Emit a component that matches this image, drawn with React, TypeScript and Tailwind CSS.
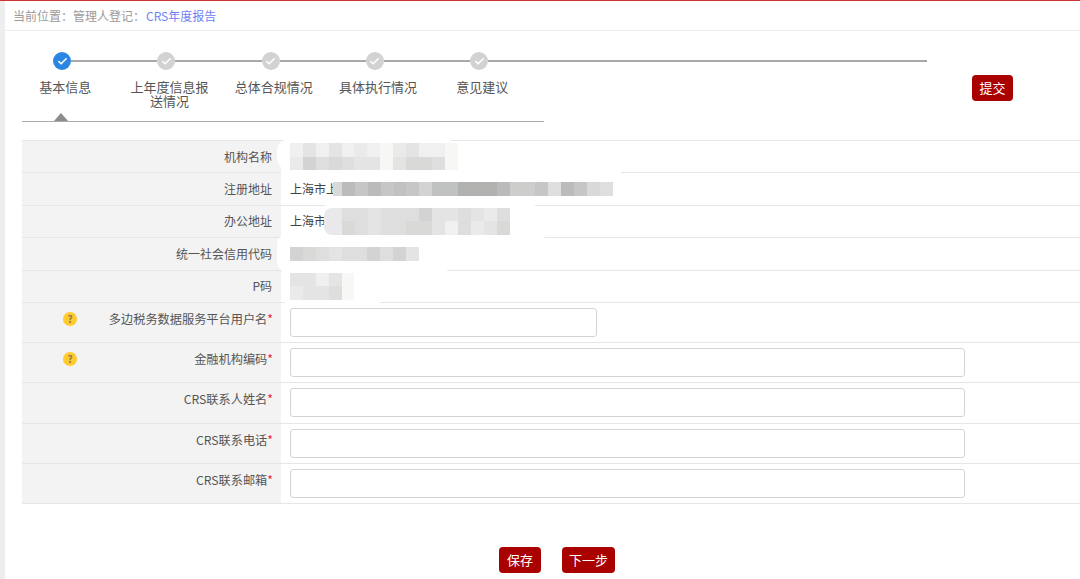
import { Check } from 'lucide-react';

const font = "font-['Noto_Sans_CJK_SC','Liberation_Sans',sans-serif]";

const steps = ['基本信息', '上年度信息报送情况', '总体合规情况', '具体执行情况', '意见建议'];

// mosaic shades, lightest to darkest (one hex digit per block)
const shades = [
  'bg-[#f7f7f6]',
  'bg-[#f0f0f0]',
  'bg-[#eaeaea]',
  'bg-[#e4e4e4]',
  'bg-[#dedede]',
  'bg-[#d9d9d8]',
  'bg-[#d3d3d3]',
  'bg-[#cdcdcc]',
  'bg-[#c5c6c5]',
  'bg-[#c0c1c1]',
  'bg-[#bbbbbb]',
  'bg-[#b1b2b0]',
];

function Mosaic({ rows }: { rows: string[] }) {
  return (
    <div className="flex flex-col">
      {rows.map((row, i) => (
        <div key={i} className="flex">
          {row.split('').map((d, j) => (
            <div key={j} className={`w-[12.9px] h-[13.5px] ${shades[parseInt(d, 16)]}`} />
          ))}
        </div>
      ))}
    </div>
  );
}

function HelpDot() {
  return (
    <div className="absolute left-[41px] top-[9px] w-[14px] h-[14px] rounded-full bg-[#fdcb30] flex items-center justify-center text-[10px] leading-none font-bold text-[#8a7a45]">
      ?
    </div>
  );
}

function InfoRow({ label, children }: { label: string; children: React.ReactNode }) {
  return (
    <div className="flex h-[32.4px] border-b border-[#e6e6e6]">
      <div className="w-[259px] shrink-0 bg-[#f3f3f3] flex items-center justify-end pr-[9px] text-[12px] text-[#555]">
        {label}
      </div>
      <div className="relative z-10 flex-1 flex items-center pl-[9px] text-[12px] text-[#444]">{children}</div>
    </div>
  );
}

function FieldRow({ label, help, narrow }: { label: string; help?: boolean; narrow?: boolean }) {
  return (
    <div className="flex h-[40.2px] border-b border-[#e6e6e6]">
      <div className="relative w-[259px] shrink-0 bg-[#f3f3f3] flex justify-end pt-[7px] pr-[8px] text-[12.2px] leading-[19px] text-[#555]">
        {help && <HelpDot />}
        <span>
          {label}
          <span className="text-[#e8112d]">*</span>
        </span>
      </div>
      <div className="flex-1 flex items-center pl-[9px]">
        <input
          className={`${narrow ? 'w-[307px]' : 'w-[675px]'} h-[29px] rounded-[3px] border border-[#d4d4d4] bg-white outline-none`}
        />
      </div>
    </div>
  );
}

function RedButton({ text, width }: { text: string; width: string }) {
  return (
    <button className={`${width} h-[26px] rounded-[4px] bg-[#a90000] text-white text-[13px] leading-none`}>
      {text}
    </button>
  );
}

export default function App() {
  return (
    <div className={`${font} w-[1080px] h-[579px] overflow-hidden bg-white flex`}>
      <div className="w-[5px] shrink-0 bg-[#eeeeee]" />
      <div className="flex-1 min-w-0 flex flex-col">
        <div className="h-px bg-[#cc3333] -ml-[5px]" />

        {/* Breadcrumb */}
        <div className="h-[30px] border-b border-[#eeeeee] flex items-center pl-[8px] text-[12px] text-[#9a9a9a]">
          当前位置：管理人登记：<span className="ml-px text-[#6f82f5]">CRS年度报告</span>
        </div>

        {/* Stepper */}
        <div className="relative h-[109px]">
          <div className="flex items-center pt-[21px] pl-[48px] pr-[153px]">
            {steps.map((s, i) => (
              <div key={s} className="contents">
                <div
                  className={`w-[18px] h-[18px] shrink-0 rounded-full flex items-center justify-center ${
                    i === 0 ? 'bg-[#2a86e2]' : 'bg-[#d2d2d2]'
                  }`}
                >
                  <Check className="w-[11px] h-[11px] text-white" strokeWidth={3.5} />
                </div>
                <div className={`h-[2px] bg-[#a8a8a8] ${i === steps.length - 1 ? 'flex-1' : 'w-[86.3px] shrink-0'}`} />
              </div>
            ))}
          </div>
          <div className="flex pl-[8px] pt-[10px]">
            {steps.map((s) => (
              <div key={s} className="w-[104.3px] shrink-0 px-[12px] text-center text-[13px] leading-[14px] text-[#555]">
                {s}
              </div>
            ))}
          </div>
          <div className="absolute left-[967px] top-[43px]">
            <RedButton text="提交" width="w-[41px]" />
          </div>
          <div className="absolute left-[17px] bottom-[18px] w-[522px] h-px bg-[#aaaaaa]" />
          <div className="absolute left-[49px] bottom-[19px] w-0 h-0 border-x-[7px] border-x-transparent border-b-[8px] border-b-[#8c8c8c]" />
        </div>

        {/* Form table */}
        <div className="relative ml-[17px] border-t border-[#e6e6e6]">
          {/* white smudges left by the redaction, they cut the row lines */}
          <div className="absolute left-[255px] -top-[2px] w-[180px] h-[31px] rounded-xl bg-white" />
          <div className="absolute left-[259px] top-[30px] w-[340px] h-[4px] bg-white" />
          <div className="absolute left-[303px] top-[63px] w-[210px] h-[4px] bg-white" />
          <div className="absolute left-[255px] top-[96px] w-[270px] h-[10px] rounded-md bg-white" />
          <div className="absolute left-[255px] top-[96px] w-[175px] h-[36px] rounded-xl bg-white" />
          <div className="absolute left-[263px] top-[160px] w-[95px] h-[4px] bg-white" />

          <InfoRow label="机构名称">
            <Mosaic rows={['1313121023110', '2645433035540']} />
          </InfoRow>
          <InfoRow label="注册地址">
            <span>上海市上</span>
            <div className="-ml-[5px] w-[9px] h-[13.5px] bg-[#d9d9d9]" />
            <Mosaic rows={['a8a898699bbba7784a854']} />
          </InfoRow>
          <InfoRow label="办公地址">
            <span>上海市</span>
            <div className="-ml-[2px] w-[18px] h-[27px] rounded-l-lg bg-[#e9e9eb]" />
            <Mosaic rows={['4434446334324', '5434455314235']} />
          </InfoRow>
          <InfoRow label="统一社会信用代码">
            <Mosaic rows={['6543446463']} />
          </InfoRow>
          <InfoRow label="P码">
            <Mosaic rows={['33130', '23340']} />
          </InfoRow>
          <FieldRow label="多边税务数据服务平台用户名" help narrow />
          <FieldRow label="金融机构编码" help />
          <FieldRow label="CRS联系人姓名" />
          <FieldRow label="CRS联系电话" />
          <FieldRow label="CRS联系邮箱" />
        </div>

        {/* Actions */}
        <div className="flex pl-[494px] pt-[43px] gap-[21px]">
          <RedButton text="保存" width="w-[42px]" />
          <RedButton text="下一步" width="w-[53px]" />
        </div>
      </div>
    </div>
  );
}
